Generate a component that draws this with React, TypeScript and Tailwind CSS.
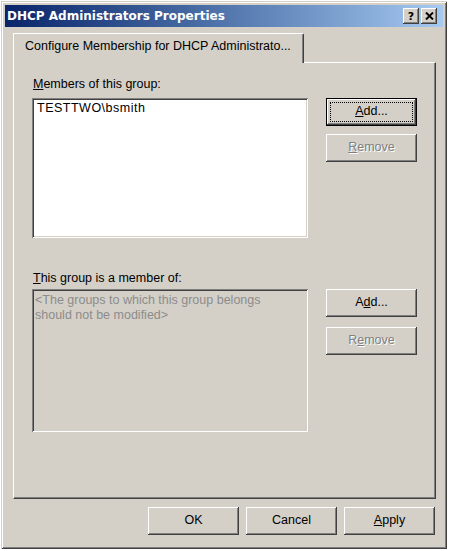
import type { ReactNode } from "react";

const raised =
  "shadow-[inset_-1px_-1px_0_#404040,inset_1px_1px_0_#ffffff,inset_-2px_-2px_0_#808080]";
const sunken =
  "shadow-[inset_1px_1px_0_#808080,inset_-1px_-1px_0_#ffffff,inset_2px_2px_0_#404040,inset_-2px_-2px_0_#d4d0c8]";
const disabledText = "text-[#808080] [text-shadow:1px_1px_0_#ffffff]";

function Btn({
  children,
  disabled,
  isDefault,
}: {
  children: ReactNode;
  disabled?: boolean;
  isDefault?: boolean;
}) {
  return (
    <div
      className={`relative flex h-[28px] w-[91px] items-center justify-center bg-[#d4d0c8] leading-none ${raised} ${
        isDefault ? "border border-black" : ""
      } ${disabled ? disabledText : ""}`}
    >
      <span className="pb-px">{children}</span>
      {isDefault && (
        <span className="absolute inset-[3px] border border-dotted border-black" />
      )}
    </div>
  );
}

function TitleBar() {
  return (
    <div className="flex h-[22px] items-center justify-between bg-gradient-to-r from-[#0a246a] to-[#a6caf0] pl-[2px] pr-[6px]">
      <span className="font-['DejaVu_Sans',sans-serif] text-[12px] font-bold leading-[22px] text-white">
        DHCP Administrators Properties
      </span>
      <div className="flex gap-[2px]">
        <div
          className={`flex h-[16px] w-[16px] items-center justify-center bg-[#d4d0c8] ${raised}`}
        >
          <span className="font-['DejaVu_Sans',sans-serif] text-[11px] font-bold leading-none">
            ?
          </span>
        </div>
        <div
          className={`flex h-[16px] w-[16px] items-center justify-center bg-[#d4d0c8] ${raised}`}
        >
          <svg width="9" height="8" viewBox="0 0 9 8">
            <path d="M1 0.5 L8 7.5 M8 0.5 L1 7.5" stroke="#000" strokeWidth="1.9" />
          </svg>
        </div>
      </div>
    </div>
  );
}

export default function App() {
  return (
    <div className="h-[551px] w-[450px] bg-white pl-px pt-px font-['Liberation_Sans',Arial,sans-serif] text-[12.5px] text-black">
      <div className="flex h-[548px] w-[446px] flex-col bg-[#d4d0c8] p-[4px] shadow-[inset_1px_1px_0_#d4d0c8,inset_-1px_-1px_0_#404040,inset_2px_2px_0_#ffffff,inset_-2px_-2px_0_#808080]">
        <TitleBar />

        <div className="ml-[8px] mt-[6px] flex w-[423px] flex-col">
          {/* tab */}
          <div className="relative z-10 -mb-px h-[30px] w-[291px] rounded-tr-[2px] border-l border-t border-r border-l-white border-t-white border-r-[#404040] bg-[#d4d0c8] pl-[11px] pt-[5px] leading-[15px] shadow-[inset_-1px_0_0_#808080]">
            Configure Membership for DHCP Administrato...
          </div>

          {/* panel */}
          <div className="flex h-[437px] flex-col border border-b-[#404040] border-l-white border-r-[#404040] border-t-white pl-[18px] pt-[14px] shadow-[inset_-1px_-1px_0_#808080]">
            <div className="mb-[6px] pl-px leading-[15px]">
              <span className="underline">M</span>embers of this group:
            </div>
            <div className="flex gap-[18px]">
              <div className={`h-[140px] w-[276px] bg-white p-[2px] ${sunken}`}>
                <div className="pl-[3px] pt-px leading-[15px] tracking-[0.5px]">
                  TESTTWO\bsmith
                </div>
              </div>
              <div className="flex flex-col gap-[8px]">
                <Btn isDefault>
                  <span className="underline">A</span>dd...
                </Btn>
                <Btn disabled>
                  <span className="underline">R</span>emove
                </Btn>
              </div>
            </div>

            <div className="mb-[3px] mt-[33px] pl-px leading-[15px]">
              <span className="underline">T</span>his group is a member of:
            </div>
            <div className="flex gap-[18px]">
              <div className={`h-[143px] w-[276px] bg-[#d4d0c8] p-[2px] ${sunken}`}>
                <div className="pl-px pt-[2px] leading-[15px] text-[#8c8c8c]">
                  &lt;The groups to which this group belongs
                  <br />
                  should not be modified&gt;
                </div>
              </div>
              <div className="flex flex-col gap-[10px]">
                <Btn>
                  A<span className="underline">d</span>d...
                </Btn>
                <Btn disabled>
                  R<span className="underline">e</span>move
                </Btn>
              </div>
            </div>
          </div>
        </div>

        <div className="mt-[8px] flex justify-end gap-[7px] pr-[8px]">
          <Btn>OK</Btn>
          <Btn>Cancel</Btn>
          <Btn>
            <span className="underline">A</span>pply
          </Btn>
        </div>
      </div>
    </div>
  );
}
